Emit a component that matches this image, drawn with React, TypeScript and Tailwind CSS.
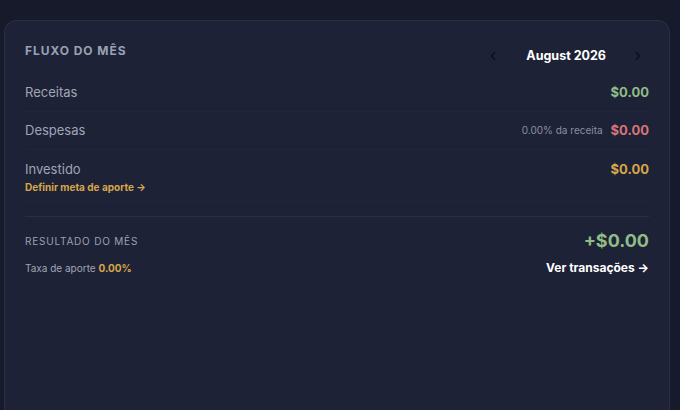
import React from "react";

export default function App() {
  return (
    <div
      className="w-[680px] h-[410px] overflow-hidden bg-[#161a2b] pt-[20px] pl-[4px] pr-[10px]"
      style={{ fontFamily: "Inter, 'Liberation Sans', sans-serif" }}
    >
      <div className="h-[420px] rounded-[12px] border border-[#2a2f45] bg-[#1e2236] px-[20px] pt-[21px]">
        <div className="flex items-start justify-between">
          <div className="pt-[1px] text-[12px] font-bold tracking-[0.08em] text-[#9aa0b5] leading-[16px] whitespace-nowrap">
            FLUXO DO MÊS
          </div>
          <div className="flex items-center pt-[6px] mr-[-1px]">
            <div className="w-[24px] h-[16px] flex items-center justify-center">
              <svg width="12" height="12" viewBox="0 0 24 24" fill="none" stroke="#0c0f1a" strokeWidth="3.5" strokeLinecap="round" strokeLinejoin="round">
                <path d="M15 6l-6 6 6 6" />
              </svg>
            </div>
            <span className="ml-[21px] mr-[20px] text-[12.5px] font-bold text-white leading-[16px] whitespace-nowrap">August 2026</span>
            <div className="w-[24px] h-[16px] flex items-center justify-center">
              <svg width="12" height="12" viewBox="0 0 24 24" fill="none" stroke="#0c0f1a" strokeWidth="3.5" strokeLinecap="round" strokeLinejoin="round">
                <path d="M9 6l6 6-6 6" />
              </svg>
            </div>
          </div>
        </div>

        <div className="mt-[10px]">
          <div className="flex items-center justify-between h-[38px] border-b border-[#212639]">
            <span className="text-[13px] text-[#a0a5b7]">Receitas</span>
            <span className="text-[13px] font-bold text-[#8fbd87]">$0.00</span>
          </div>
          <div className="flex items-center justify-between h-[38px] border-b border-[#212639]">
            <span className="text-[13px] text-[#a0a5b7]">Despesas</span>
            <div className="flex items-center gap-[8px]">
              <span className="text-[10px] text-[#8a90a3]">0.00% da receita</span>
              <span className="text-[13px] font-bold text-[#d77578]">$0.00</span>
            </div>
          </div>
          <div className="flex justify-between pt-[11px] h-[52px] border-b border-[#212639]">
            <div className="flex flex-col">
              <span className="text-[13px] text-[#a0a5b7] leading-[16px]">Investido</span>
              <span className="text-[10px] font-bold text-[#d6a64a] leading-[14px] mt-[3px]">
                Definir meta de aporte →
              </span>
            </div>
            <span className="text-[13px] font-bold text-[#d6a64a] leading-[16px]">$0.00</span>
          </div>
        </div>

        <div className="mt-[14px] border-t border-[#2a2f44] pt-[15px]">
          <div className="flex items-center justify-between">
            <span className="text-[10px] tracking-[0.08em] text-[#9aa0b3]">RESULTADO DO MÊS</span>
            <span className="text-[18px] font-bold text-[#8fbd87] leading-none">+$0.00</span>
          </div>
          <div className="flex items-center justify-between mt-[9px]">
            <span className="text-[10px] text-[#a0a5b7]">
              Taxa de aporte <span className="font-bold text-[#d6a64a]">0.00%</span>
            </span>
            <span className="text-[12px] font-bold text-white">Ver transações →</span>
          </div>
        </div>
      </div>
    </div>
  );
}
